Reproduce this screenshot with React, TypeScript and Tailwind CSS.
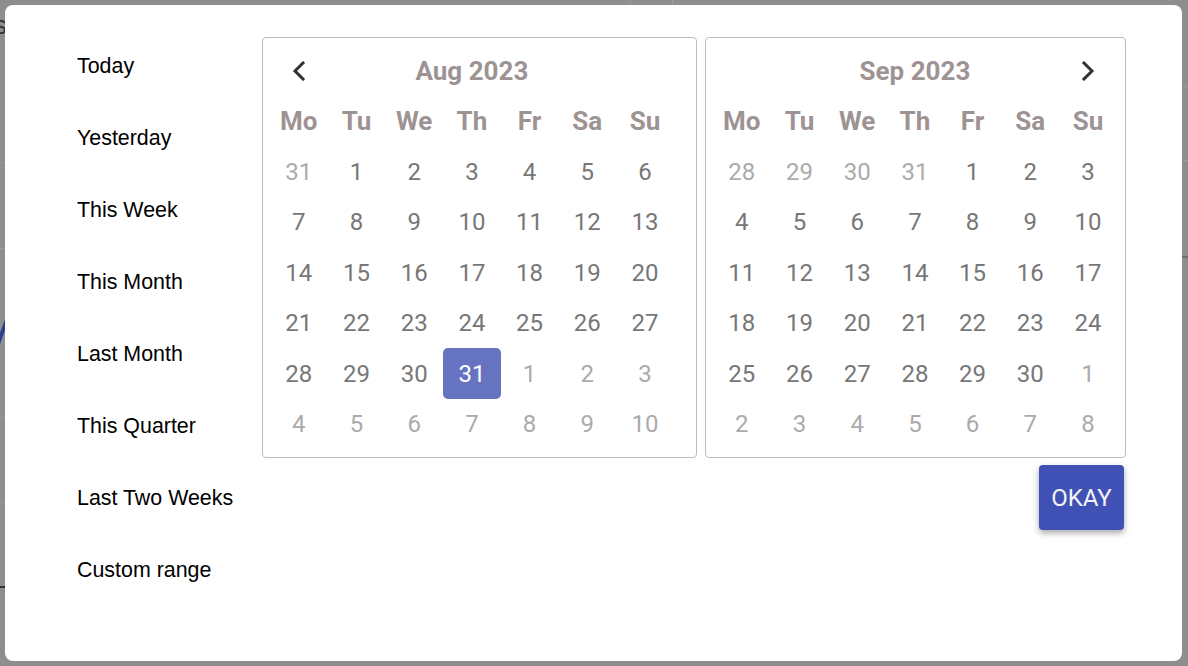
import React from "react";

type Day = { n: number; cur: boolean; sel?: boolean };

const aug: Day[][] = [
  [{ n: 31, cur: false }, { n: 1, cur: true }, { n: 2, cur: true }, { n: 3, cur: true }, { n: 4, cur: true }, { n: 5, cur: true }, { n: 6, cur: true }],
  [7, 8, 9, 10, 11, 12, 13].map((n) => ({ n, cur: true })),
  [14, 15, 16, 17, 18, 19, 20].map((n) => ({ n, cur: true })),
  [21, 22, 23, 24, 25, 26, 27].map((n) => ({ n, cur: true })),
  [{ n: 28, cur: true }, { n: 29, cur: true }, { n: 30, cur: true }, { n: 31, cur: true, sel: true }, { n: 1, cur: false }, { n: 2, cur: false }, { n: 3, cur: false }],
  [4, 5, 6, 7, 8, 9, 10].map((n) => ({ n, cur: false })),
];

const sep: Day[][] = [
  [{ n: 28, cur: false }, { n: 29, cur: false }, { n: 30, cur: false }, { n: 31, cur: false }, { n: 1, cur: true }, { n: 2, cur: true }, { n: 3, cur: true }],
  [4, 5, 6, 7, 8, 9, 10].map((n) => ({ n, cur: true })),
  [11, 12, 13, 14, 15, 16, 17].map((n) => ({ n, cur: true })),
  [18, 19, 20, 21, 22, 23, 24].map((n) => ({ n, cur: true })),
  [{ n: 25, cur: true }, { n: 26, cur: true }, { n: 27, cur: true }, { n: 28, cur: true }, { n: 29, cur: true }, { n: 30, cur: true }, { n: 1, cur: false }],
  [2, 3, 4, 5, 6, 7, 8].map((n) => ({ n, cur: false })),
];

const weekdays = ["Mo", "Tu", "We", "Th", "Fr", "Sa", "Su"];

const presets = [
  "Today",
  "Yesterday",
  "This Week",
  "This Month",
  "Last Month",
  "This Quarter",
  "Last Two Weeks",
  "Custom range",
];

function ChevronLeft() {
  return (
    <svg width="14" height="20" viewBox="0 0 14 20" fill="none">
      <path d="M11 2 L3 10 L11 18" stroke="#333333" strokeWidth="3" strokeLinecap="square" />
    </svg>
  );
}

function ChevronRight() {
  return (
    <svg width="14" height="20" viewBox="0 0 14 20" fill="none">
      <path d="M3 2 L11 10 L3 18" stroke="#333333" strokeWidth="3" strokeLinecap="square" />
    </svg>
  );
}

function Calendar({ title, rows, prev, next, width }: { title: string; rows: Day[][]; prev?: boolean; next?: boolean; width: string }) {
  return (
    <div className={`${width} h-[421px] border border-[#bdbdbd] rounded-[4px] pl-[7px] pt-[8px]`}>
      <div className="grid grid-cols-[repeat(7,57.7px)] auto-rows-[50.4px]">
        <div className="flex items-center justify-center">{prev && <ChevronLeft />}</div>
        <div className="col-span-5 flex items-center justify-center text-[26px] font-bold text-[#9e9393]">{title}</div>
        <div className="flex items-center justify-center">{next && <ChevronRight />}</div>
        {weekdays.map((w) => (
          <div key={w} className="flex items-center justify-center text-[26px] font-bold text-[#9e9393]">
            {w}
          </div>
        ))}
        {rows.flat().map((d, i) => (
          <div
            key={i}
            className={
              d.sel
                ? "flex items-center justify-center text-[24px] rounded-[5px] bg-[#6673c1] text-white"
                : d.cur
                ? "flex items-center justify-center text-[24px] text-[#777777]"
                : "flex items-center justify-center text-[24px] text-[#ababab]"
            }
          >
            {d.n}
          </div>
        ))}
      </div>
    </div>
  );
}

export default function App() {
  return (
    <div className="relative w-[1188px] h-[666px] overflow-hidden bg-[#8e8e8e] font-['Roboto',sans-serif]">
      {/* backdrop remnants */}
      <div className="absolute left-0 top-[162px] w-[6px] h-px bg-[#9a9a9a]" />
      <div className="absolute left-0 top-[248px] w-[6px] h-px bg-[#9a9a9a]" />
      <div className="absolute left-0 top-[417px] w-[6px] h-px bg-[#9a9a9a]" />
      <div className="absolute left-0 top-[502px] w-[6px] h-px bg-[#9a9a9a]" />
      <div className="absolute left-0 top-[586px] w-[6px] h-[2px] bg-[#333333]" />
      <div className="absolute left-0 top-[318px] w-[4px] h-[30px] bg-[#2e3b8f] skew-x-[-20deg]" />
      <div className="absolute left-[-6px] top-[12px] text-[26px] leading-none text-[#333333] font-['Liberation_Sans',sans-serif]">s</div>
      <div className="absolute right-0 top-[86px] w-[6px] h-px bg-[#9a9a9a]" />
      <div className="absolute right-0 top-[160px] w-[6px] h-px bg-[#9a9a9a]" />
      <div className="absolute right-0 top-[256px] w-[6px] h-[2px] bg-[#6e6e6e]" />
      <div className="absolute left-[630px] top-0 w-px h-[5px] bg-[#9a9a9a]" />
      <div className="absolute left-[672px] top-0 w-px h-[5px] bg-[#9a9a9a]" />

      {/* dialog */}
      <div className="absolute left-[5px] top-[5px] w-[1177px] h-[656px] bg-white rounded-[8px] flex">
        <div className="w-[257px] pl-[72px] pt-[25px] flex flex-col font-['Liberation_Sans',sans-serif] text-[21.4px] text-black">
          {presets.map((p) => (
            <div key={p} className="h-[72px] flex items-center">
              {p}
            </div>
          ))}
        </div>
        <div className="pt-[32px] flex flex-col w-[864px]">
          <div className="flex gap-[8px]">
            <Calendar title="Aug 2023" rows={aug} prev width="w-[435px]" />
            <Calendar title="Sep 2023" rows={sep} next width="w-[421px]" />
          </div>
          <div className="flex justify-end pr-[2px] pt-[7px]">
            <button className="w-[85px] h-[65px] bg-[#3f51b5] rounded-[4px] text-[24px] text-[#f2f2f2] shadow-[0_3px_6px_rgba(0,0,0,0.35)] flex items-center justify-center">
              OKAY
            </button>
          </div>
        </div>
      </div>
    </div>
  );
}
